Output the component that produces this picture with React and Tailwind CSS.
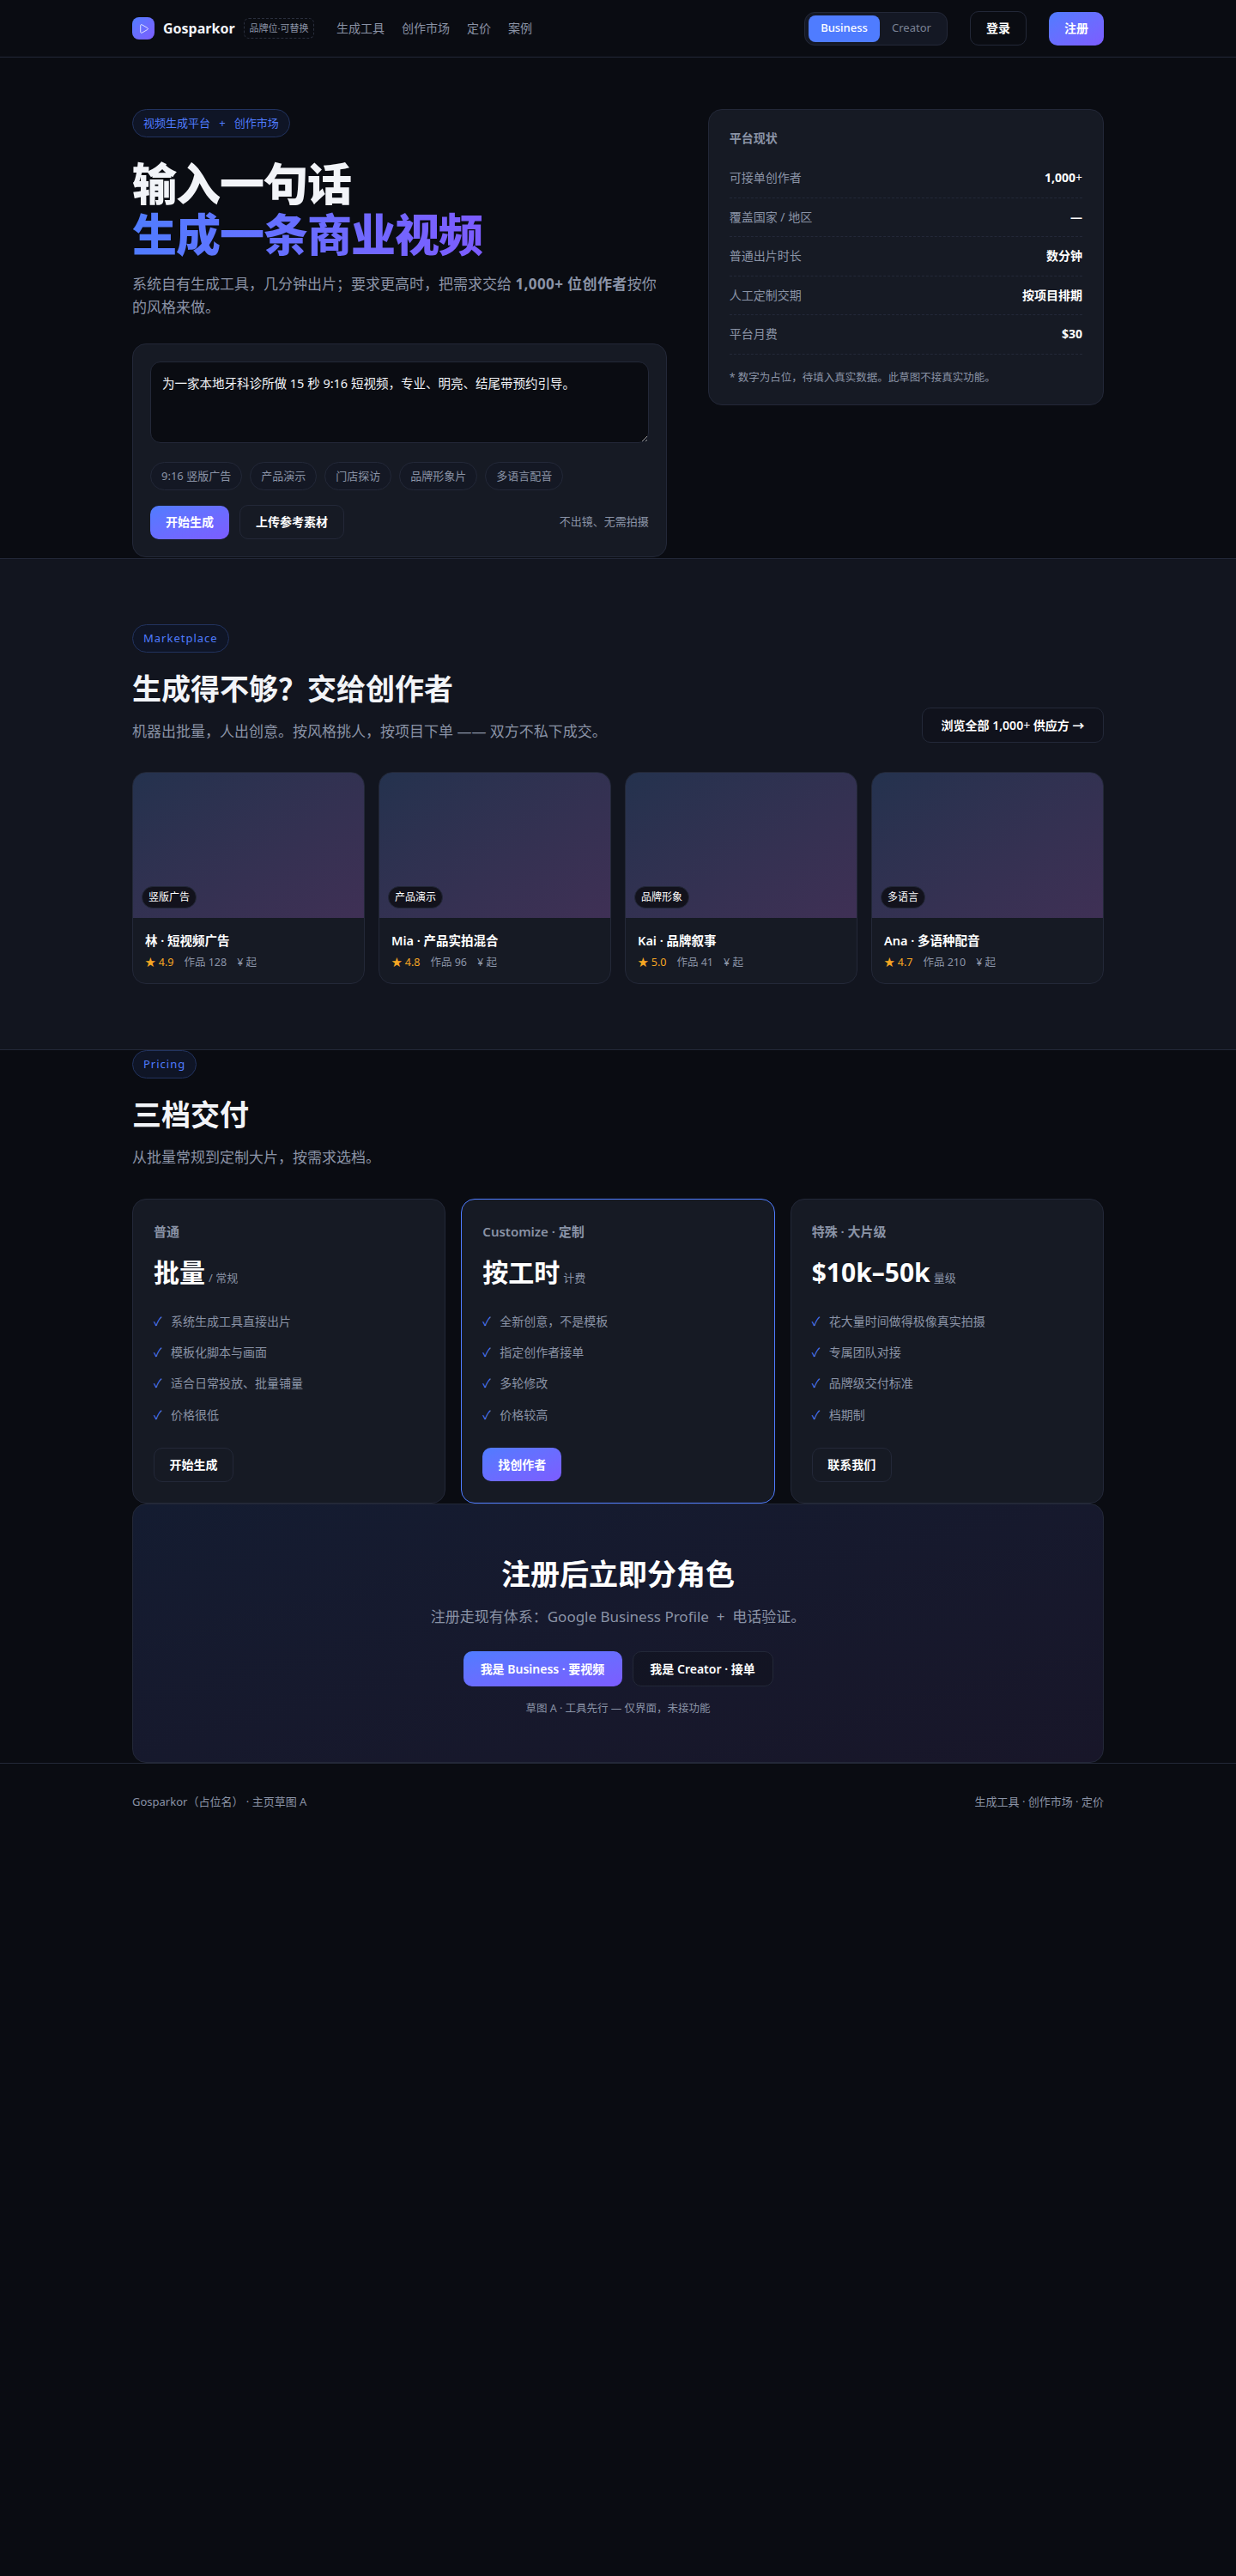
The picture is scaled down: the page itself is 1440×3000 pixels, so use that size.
import { Play } from 'lucide-react';

const stats = [
	{ label: '可接单创作者', value: <>1,000<span className="font-normal">+</span></> },
	{ label: '覆盖国家 / 地区', value: '—' },
	{ label: '普通出片时长', value: '数分钟' },
	{ label: '人工定制交期', value: '按项目排期' },
	{ label: '平台月费', value: '$30' },
];

const chips = ['9:16 竖版广告', '产品演示', '门店探访', '品牌形象片', '多语言配音'];

const creators = [
	{ tag: '竖版广告', name: '林 · 短视频广告', rating: '4.9', works: 128 },
	{ tag: '产品演示', name: 'Mia · 产品实拍混合', rating: '4.8', works: 96 },
	{ tag: '品牌形象', name: 'Kai · 品牌叙事', rating: '5.0', works: 41 },
	{ tag: '多语言', name: 'Ana · 多语种配音', rating: '4.7', works: 210 },
];

const plans = [
	{
		label: '普通',
		price: '批量',
		unit: '/ 常规',
		items: ['系统生成工具直接出片', '模板化脚本与画面', '适合日常投放、批量铺量', '价格很低'],
		cta: '开始生成',
	},
	{
		label: 'Customize · 定制',
		price: '按工时',
		unit: '计费',
		items: ['全新创意，不是模板', '指定创作者接单', '多轮修改', '价格较高'],
		cta: '找创作者',
		featured: true,
	},
	{
		label: '特殊 · 大片级',
		price: '$10k–50k',
		unit: '量级',
		items: ['花大量时间做得极像真实拍摄', '专属团队对接', '品牌级交付标准', '档期制'],
		cta: '联系我们',
	},
];

const Pill = ({ children, className = '' }) => (
	<span
		className={`flex w-fit items-center h-[33px] px-3 rounded-full border border-[#22335f] bg-[#0f1526] text-[#4f7cff] text-[13px] ${className}`}
	>
		{children}
	</span>
);

const PrimaryButton = ({ children, className = '' }) => (
	<button
		className={`rounded-[10px] bg-gradient-to-br from-[#4f7cff] to-[#7c5cff] text-white text-sm font-semibold ${className}`}
	>
		{children}
	</button>
);

const GhostButton = ({ children, className = '' }) => (
	<button
		className={`rounded-[10px] border border-[#232838] text-white text-sm font-semibold ${className}`}
	>
		{children}
	</button>
);

const App = () => {
	return (
		<div className="min-h-screen bg-[#0a0c12] text-[#f2f4f8] font-['Noto_Sans','Noto_Sans_CJK_SC',sans-serif]">
			{/* Nav */}
			<nav className="h-[67px] border-b border-[#232838]">
				<div className="max-w-[1180px] h-full mx-auto px-6 flex items-center">
					<div className="w-[26px] h-[26px] rounded-lg bg-gradient-to-br from-[#4f7cff] to-[#7c5cff] flex items-center justify-center">
						<Play size={13} strokeWidth={1.5} className="text-white" />
					</div>
					<span className="ml-2.5 w-[84px] text-base font-bold">Gosparkor</span>
					<span className="ml-2.5 w-[82px] h-6 flex items-center justify-center rounded-md border border-dashed border-[#2a2f3d] text-[11px] text-[#8a93a6]">
						品牌位·可替换
					</span>
					<div className="ml-[26px] flex gap-5 text-sm text-[#8a93a6]">
						<span>生成工具</span>
						<span>创作市场</span>
						<span>定价</span>
						<span>案例</span>
					</div>
					<div className="ml-auto h-[39px] w-[167px] p-1 flex items-center rounded-xl border border-[#232838] bg-[#141824] text-[13px]">
						<span className="w-[83px] h-[31px] flex items-center justify-center rounded-lg bg-[#4f7cff] text-white font-medium">
							Business
						</span>
						<span className="flex-1 text-center text-[#7a8294]">Creator</span>
					</div>
					<GhostButton className="ml-[26px] w-[66px] h-10 bg-[#0a0c12]">登录</GhostButton>
					<PrimaryButton className="ml-[26px] w-16 h-[39px]">注册</PrimaryButton>
				</div>
			</nav>

			{/* Hero */}
			<section className="max-w-[1180px] mx-auto px-6 pt-[60px] pb-px grid grid-cols-[1.35fr_1fr] gap-12 items-start">
				<div>
					<Pill>视频生成平台{'\u00a0\u00a0\u00a0'}+{'\u00a0\u00a0\u00a0'}创作市场</Pill>
					<h1 className="mt-6 text-[52px] leading-[59px] font-extrabold tracking-[-1px]">
						输入一句话
						<br />
						<span className="bg-gradient-to-r from-[#4f7cff] to-[#7c5cff] bg-clip-text text-transparent">
							生成一条商业视频
						</span>
					</h1>
					<p className="mt-[15px] text-[17px] leading-[27px] text-[#8a93a6]">
						系统自有生成工具，几分钟出片；要求更高时，把需求交给{' '}
						<b className="font-bold tracking-[0.4px]">1,000+ 位创作者</b>按你的风格来做。
					</p>

					{/* Prompt box */}
					<div className="mt-[29px] p-5 rounded-2xl border border-[#232838] bg-[#161a24]">
						<textarea
							className="block w-full h-[95px] px-[13px] py-3.5 rounded-xl border border-[#232838] bg-[#0a0c12] text-[14.5px] leading-5 text-[#f2f4f8] outline-none"
							defaultValue="为一家本地牙科诊所做 15 秒 9:16 短视频，专业、明亮、结尾带预约引导。"
						/>
						<div className="mt-[22px] flex gap-[9px]">
							{chips.map((chip) => (
								<span
									key={chip}
									className="h-[33px] px-3 flex items-center rounded-full border border-[#232838] bg-[#141824] text-[13px] text-[#8a93a6]"
								>
									{chip}
								</span>
							))}
						</div>
						<div className="mt-[17px] flex items-center gap-3">
							<PrimaryButton className="w-[92px] h-[39px]">开始生成</PrimaryButton>
							<GhostButton className="w-[122px] h-10">上传参考素材</GhostButton>
							<span className="ml-auto text-[13px] text-[#8a93a6]">不出镜、无需拍摄</span>
						</div>
					</div>
				</div>

				{/* Stats */}
				<aside className="px-6 pt-[21px] pb-[21px] rounded-2xl border border-[#232838] bg-[#161a24]">
					<h3 className="text-sm leading-6 font-semibold text-[#8a93a6]">平台现状</h3>
					<div className="mt-[12px]">
						{stats.map((row) => (
							<div
								key={row.label}
								className="h-[45.5px] flex items-center justify-between border-b border-dashed border-[#232838] text-sm"
							>
								<span className="text-[#8a93a6]">{row.label}</span>
								<span className="font-bold text-white">{row.value}</span>
							</div>
						))}
					</div>
					<p className="mt-[17px] text-[12.5px] leading-5 text-[#8a93a6]">
						* 数字为占位，待填入真实数据。此草图不接真实功能。
					</p>
				</aside>
			</section>

			{/* Marketplace */}
			<section className="border-y border-[#232838] bg-[#12151f] py-[76px]">
				<div className="max-w-[1180px] mx-auto px-6">
					<div className="flex items-end justify-between">
						<div>
							<Pill className="tracking-[1px]">Marketplace</Pill>
							<h2 className="mt-[18px] text-[34px] leading-[48px] font-bold">生成得不够？交给创作者</h2>
							<p className="mt-3 text-[17px] leading-[28px] text-[#8a93a6]">
								机器出批量，人出创意。按风格挑人，按项目下单 —— 双方不私下成交。
							</p>
						</div>
						<GhostButton className="w-[212px] h-[41px] bg-[#0a0c12]/20 mb-px">
							浏览全部 1,000<span className="font-normal">+</span> 供应方 →
						</GhostButton>
					</div>
					<div className="mt-[33px] grid grid-cols-4 gap-4">
						{creators.map((item) => (
							<div key={item.name} className="rounded-2xl border border-[#232838] bg-[#161a24] overflow-hidden">
								<div className="relative h-[169px] bg-gradient-to-br from-[#24324e] to-[#3f3055]">
									<span className="absolute left-2.5 bottom-[11px] h-[26px] px-[7px] flex items-center rounded-full border border-[#232838] bg-[#12121c] text-xs text-white">
										{item.tag}
									</span>
								</div>
								<div className="px-[14px] py-[14px]">
									<div className="text-[14.5px] leading-[24px] font-semibold text-white">{item.name}</div>
									<div className="mt-1 flex gap-3 text-[12.5px] leading-5 text-[#8a93a6]">
										<span className="text-[#f5a623]">★ {item.rating}</span>
										<span>作品 {item.works}</span>
										<span>¥ 起</span>
									</div>
								</div>
							</div>
						))}
					</div>
				</div>
			</section>

			{/* Pricing */}
			<section className="max-w-[1180px] mx-auto px-6">
				<Pill className="tracking-[1px]">Pricing</Pill>
				<h2 className="mt-[18px] text-[34px] leading-[48px] font-bold">三档交付</h2>
				<p className="mt-3 text-[17px] leading-[28px] text-[#8a93a6]">从批量常规到定制大片，按需求选档。</p>
				<div className="mt-[34px] grid grid-cols-3 gap-[18px]">
					{plans.map((plan) => (
						<div
							key={plan.label}
							className={`h-[355px] px-6 pt-[27px] rounded-2xl border bg-[#161a24] ${plan.featured ? 'border-[#4f7cff]' : 'border-[#232838]'}`}
						>
							<div className="text-[15px] leading-5 font-semibold text-[#8a93a6]">{plan.label}</div>
							<div className="mt-4 flex items-baseline gap-1">
								<span className="text-[30px] leading-[44px] font-bold text-white">{plan.price}</span>
								<span className="text-[13px] text-[#8a93a6]">{plan.unit}</span>
							</div>
							<ul className="mt-6 flex flex-col gap-[15.4px]">
								{plan.items.map((line) => (
									<li key={line} className="h-[21px] flex items-center text-sm text-[#8a93a6]">
										<span className="w-5 shrink-0 text-[#4f7cff]">✓</span>
										{line}
									</li>
								))}
							</ul>
							{plan.featured ? (
								<PrimaryButton className="mt-7 w-[92px] h-[39px]">{plan.cta}</PrimaryButton>
							) : (
								<GhostButton className="mt-7 w-[93px] h-10">{plan.cta}</GhostButton>
							)}
						</div>
					))}
				</div>

				{/* Signup CTA */}
				<div className="h-[302px] pt-[57px] flex flex-col items-center rounded-2xl border border-[#232838] bg-gradient-to-br from-[#141c31] to-[#181629]">
					<h2 className="text-[34px] leading-[48px] font-bold text-white">注册后立即分角色</h2>
					<p className="mt-[13px] text-[17px] leading-[26px] text-[#8a93a6]">
						注册走现有体系：Google Business Profile{'\u00a0'} +{'\u00a0'} 电话验证。
					</p>
					<div className="mt-[27px] flex gap-3">
						<PrimaryButton className="w-[185px] h-[41px]">我是 Business · 要视频</PrimaryButton>
						<GhostButton className="w-[164px] h-[41px] bg-[#0a0c12]/30">我是 Creator · 接单</GhostButton>
					</div>
					<p className="mt-4 text-[12.5px] leading-5 text-[#8a93a6]">草图 A · 工具先行 — 仅界面，未接功能</p>
				</div>
			</section>

			{/* Footer */}
			<footer className="border-t border-[#232838]">
				<div className="max-w-[1180px] mx-auto px-6 pt-[34px] flex justify-between text-[13px] leading-5 text-[#8a93a6]">
					<span>Gosparkor（占位名） · 主页草图 A</span>
					<span>生成工具 · 创作市场 · 定价</span>
				</div>
			</footer>
		</div>
	);
};

export default App;
